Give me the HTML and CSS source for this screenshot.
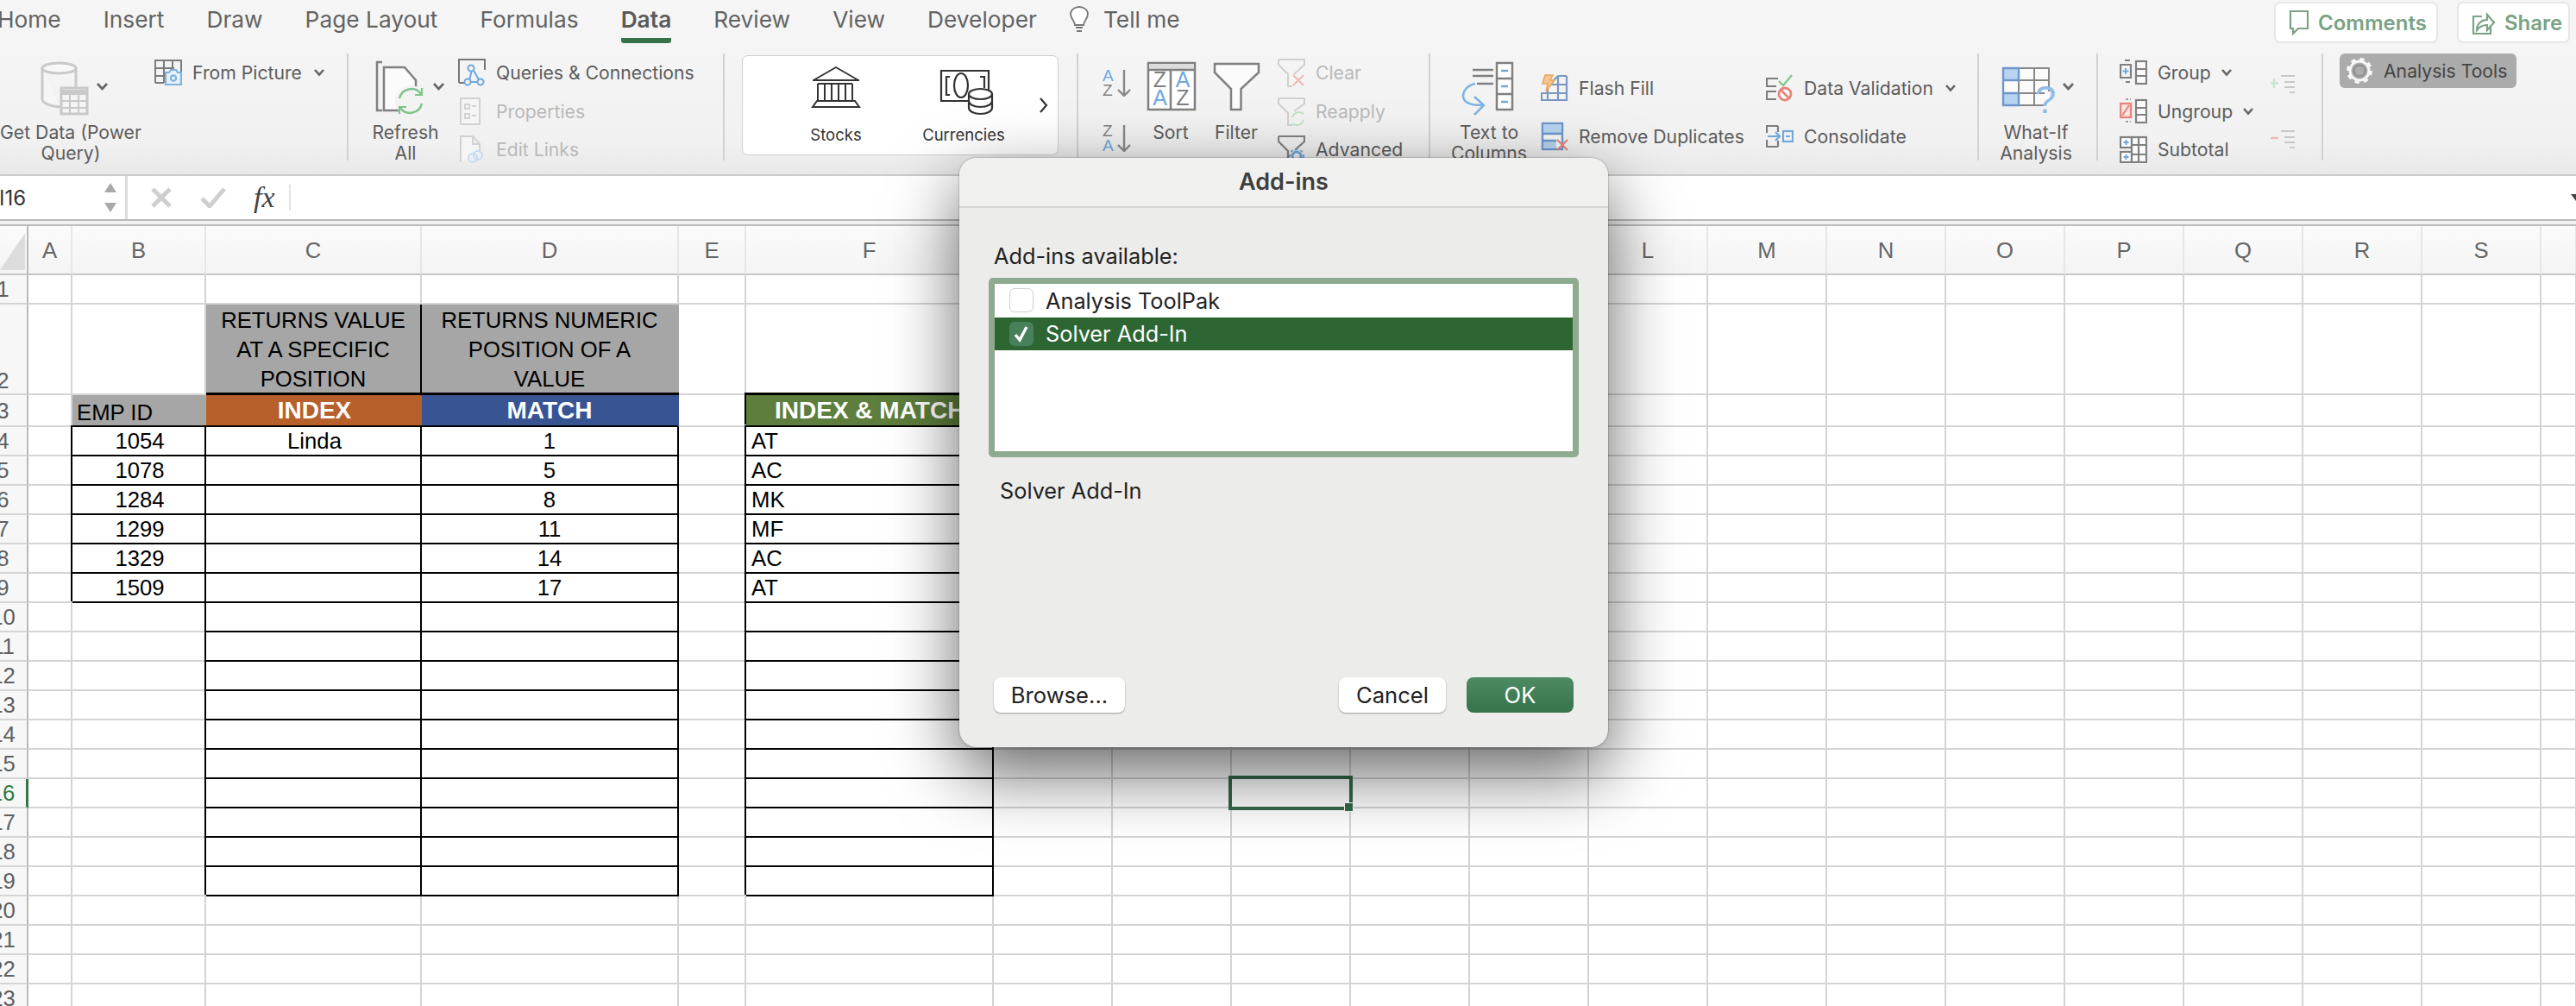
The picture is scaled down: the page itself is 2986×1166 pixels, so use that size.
FILE: index.html
```html
<!DOCTYPE html>
<html lang="en">
  <head>
    <meta charset="UTF-8" />
    <title>Excel - Add-ins</title>
    <link rel="stylesheet" href="styles.css">
  </head>
  <body>
    <svg class="defs" width="0" height="0">
      <symbol id="chev" viewBox="0 0 14 10"><path d="M2 2l5 5.5L12 2" fill="none" stroke="#666" stroke-width="2.6"/></symbol>
    </svg>

    <!-- tabs -->
    <div class="tabs">
      <span class="tab tab-first">Home</span>
      <span class="tab">Insert</span>
      <span class="tab">Draw</span>
      <span class="tab">Page Layout</span>
      <span class="tab">Formulas</span>
      <span class="tab active">Data</span>
      <span class="tab">Review</span>
      <span class="tab">View</span>
      <span class="tab">Developer</span>
      <span class="tell">
        <svg width="24" height="32" viewBox="0 0 24 32" fill="none" stroke="#777" stroke-width="1.8"><path d="M7 22c0-5-5-7-5-13a10 8 0 0 1 20 0c0 6-5 8-5 13z" fill="#fff"/><path d="M8 25h8M9 29h6"/></svg>
        Tell me
      </span>
      <div class="top-btns">
        <button class="top-btn btn-comments">
          <svg width="24" height="30" viewBox="0 0 24 30" fill="none" stroke="#7aa284" stroke-width="2.2"><path d="M2 2h20v20H11l-6 6v-6H2z"/></svg>
          Comments
        </button>
        <button class="top-btn btn-share">
          <svg width="28" height="30" viewBox="0 0 28 30" fill="none" stroke="#7aa284" stroke-width="2.2"><path d="M12 8H2v20h20v-8"/><path d="M6 24c0-8 6-12 12-12V6l8 9-8 9v-6c-5 0-9 2-12 6z"/></svg>
          Share
        </button>
      </div>
    </div>

    <!-- ribbon -->
    <div class="ribbon">
      <div class="group g-getdata">
        <div class="big big-getdata">
          <svg width="164" height="79" viewBox="0 0 164 79" fill="none" stroke="#c9c9c9" stroke-width="3">
            <path d="M49 17v36c0 4 8 8 21 9M88 17v22" fill="#f6f6f6"/>
            <ellipse cx="68.500" cy="17" rx="19.500" ry="6" fill="#f8f8f8"/>
            <rect x="71" y="40" width="30" height="30" fill="#f4f4f4"/>
            <path d="M71 45h30" stroke-width="6"/>
            <path d="M71 55h30M71 63h30M81 48v22M91 48v22" stroke-width="2"/>
            <path d="M113 35l5.500 6 5.500-6" stroke="#666" stroke-width="2.600"/>
          </svg>
          <div class="lbl">Get Data (Power<br>Query)</div>
        </div>
        <div class="stack">
          <div class="row">
            <svg width="32" height="30" viewBox="0 0 32 30" fill="none">
              <path d="M1 27V1h30v16M1 10h22M1 19h10M11 1v26M21 1v11M1 27h10" stroke="#7c7c7c" stroke-width="2"/>
              <path d="M13 15h4l2-3h6l2 3h4v14H13z" fill="#e8f1fa" stroke="#7fb2e0" stroke-width="2.200"/>
              <circle cx="22" cy="21.500" r="3.200" stroke="#7fb2e0" stroke-width="2.200"/>
            </svg>
            <span>From Picture</span>
            <svg class="chev" width="14" height="10"><use href="#chev"/></svg>
          </div>
        </div>
      </div>

      <div class="group g-refresh">
        <div class="big big-refresh">
          <svg width="120" height="79" viewBox="0 0 120 79" fill="none">
            <path d="M33 10h-6v56h6" stroke="#808080" stroke-width="2.500"/>
            <path d="M35 16h24l13 15v35H35z" fill="#fbfbfb" stroke="#808080" stroke-width="2.500"/>
            <circle cx="66" cy="55" r="18" fill="#f3f3f3"/>
            <path d="M53 52a14 14 0 0 1 25-5M79 58a14 14 0 0 1-25 5" stroke="#7fc48a" stroke-width="2.500"/>
            <path d="M79 40v8h-8M53 70v-8h8" stroke="#7fc48a" stroke-width="2.200"/>
            <path d="M93 35l5.500 6 5.500-6" stroke="#666" stroke-width="2.600"/>
          </svg>
          <div class="lbl">Refresh<br>All</div>
        </div>
        <div class="stack">
          <div class="row">
            <svg width="32" height="32" viewBox="0 0 32 32" fill="none">
              <path d="M1 28V1h30v12M1 28h8" stroke="#777" stroke-width="2"/>
              <path d="M16 12l-3 14M17 12l8 14M15 27h7" stroke="#6fa8dc" stroke-width="2"/>
              <circle cx="15" cy="11" r="3.500" fill="#f3f3f3" stroke="#6fa8dc" stroke-width="2"/>
              <circle cx="11" cy="27" r="3.500" fill="#f3f3f3" stroke="#6fa8dc" stroke-width="2"/>
              <circle cx="26" cy="27" r="3.500" fill="#f3f3f3" stroke="#6fa8dc" stroke-width="2"/>
            </svg>
            <span>Queries &amp; Connections</span>
          </div>
          <div class="row off">
            <svg width="32" height="32" viewBox="0 0 32 32" fill="none" stroke="#d2d2d2" stroke-width="2">
              <rect x="3" y="1" width="22" height="30" fill="#f5f5f5"/>
              <path d="M8 8h5v5H8zM8 19h5v5H8zM16 10h5M16 21h5"/>
            </svg>
            <span>Properties</span>
          </div>
          <div class="row off">
            <svg width="32" height="32" viewBox="0 0 32 32" fill="none" stroke="#d2d2d2" stroke-width="2">
              <path d="M3 31V1h14l8 9v9" fill="#f5f5f5"/>
              <path d="M17 1v9h8"/>
              <circle cx="17" cy="26" r="5" stroke="#c6dcf0"/>
              <circle cx="23" cy="23" r="5" stroke="#c6dcf0"/>
            </svg>
            <span>Edit Links</span>
          </div>
        </div>
      </div>

      <div class="group g-types">
        <div class="gallery">
          <div class="gal-item">
            <svg width="148" height="80" viewBox="0 0 148 80" fill="none" stroke="#333" stroke-width="2">
              <path d="M74 13L48 28h52zM47 28h54" stroke-linejoin="round"/>
              <path d="M53 32v20M61 32v20M69 32v20M77 32v20M85 32v20M93 32v20M53 32h40"/>
              <path d="M52 52h44l5 7H47z"/>
            </svg>
            <div class="gal-lbl">Stocks</div>
          </div>
          <div class="gal-item">
            <svg width="148" height="80" viewBox="0 0 148 80" fill="none" stroke="#333" stroke-width="2.200">
              <path d="M84 52H48V17h55v22"/>
              <path d="M58 24h-4v21h4M93 24h5v13"/>
              <ellipse cx="71" cy="34" rx="8" ry="14"/>
              <path d="M80 44v16c0 4 6 7 13.500 7s13.500-3 13.500-7V44" fill="#fff"/>
              <ellipse cx="93.500" cy="44" rx="13.500" ry="6" fill="#fff"/>
              <path d="M80 52c0 4 6 7 13.500 7s13.500-3 13.500-7"/>
            </svg>
            <div class="gal-lbl">Currencies</div>
          </div>
          <svg class="gal-more" width="12" height="22" viewBox="0 0 12 22" fill="none" stroke="#333" stroke-width="2.200"><path d="M2 3l7 8-7 8"/></svg>
        </div>
      </div>

      <div class="group g-sort">
        <div class="az">
          <svg width="34" height="32" viewBox="0 0 34 32" fill="none">
            <text x="0" y="14" class="ic-txt blue">A</text>
            <text x="0" y="31" class="ic-txt grey">Z</text>
            <path d="M25 1v30M18 24l7 7 7-7" stroke="#888" stroke-width="2.400"/>
          </svg>
          <svg width="34" height="32" viewBox="0 0 34 32" fill="none">
            <text x="0" y="14" class="ic-txt grey">Z</text>
            <text x="0" y="31" class="ic-txt blue">A</text>
            <path d="M25 1v30M18 24l7 7 7-7" stroke="#888" stroke-width="2.400"/>
          </svg>
        </div>
        <div class="big big-sort">
          <svg width="76" height="79" viewBox="0 0 76 79" fill="none">
            <rect x="12" y="11" width="54" height="54" fill="#fff" stroke="#808080" stroke-width="2.500"/>
            <rect x="13" y="12" width="52" height="7" fill="#dcdcdc"/>
            <path d="M38 19v46M13 19h52" stroke="#808080" stroke-width="2.500"/>
            <text x="25.500" y="39" class="ic-big grey" text-anchor="middle">Z</text>
            <text x="25.500" y="60" class="ic-big blue" text-anchor="middle">A</text>
            <text x="52" y="39" class="ic-big blue" text-anchor="middle">A</text>
            <text x="52" y="60" class="ic-big grey" text-anchor="middle">Z</text>
          </svg>
          <div class="lbl">Sort</div>
        </div>
        <div class="big big-filter">
          <svg width="76" height="79" viewBox="0 0 76 79" fill="none">
            <path d="M13 12h51v10L43.500 41v24H32V41L13 22z" fill="#fbfbfb" stroke="#808080" stroke-width="2.500"/>
          </svg>
          <div class="lbl">Filter</div>
        </div>
        <div class="stack stack-filter">
          <div class="row off">
            <svg width="32" height="34" viewBox="0 0 32 34" fill="none">
              <path d="M1 2h30v6L19 19M1 2v6l11 11v14h5" stroke="#d0d0d0" stroke-width="2"/>
              <path d="M18 20l12 12M30 20L18 32" stroke="#f2b8b2" stroke-width="2"/>
            </svg>
            <span>Clear</span>
          </div>
          <div class="row off">
            <svg width="32" height="34" viewBox="0 0 32 34" fill="none">
              <path d="M1 2h30v6L19 17M1 2v6l11 11v14h5" stroke="#d0d0d0" stroke-width="2"/>
              <path d="M17 24a8 8 0 0 1 13-4M30 27a8 8 0 0 1-13 4" stroke="#bfe3c6" stroke-width="2"/>
            </svg>
            <span>Reapply</span>
          </div>
          <div class="row on">
            <svg width="32" height="34" viewBox="0 0 32 34" fill="none">
              <path d="M1 2h30v6L20 18M1 2v6l11 11v14" stroke="#808080" stroke-width="2.200"/>
              <circle cx="22" cy="25" r="5" stroke="#6fa8dc" stroke-width="3"/>
              <circle cx="22" cy="25" r="8" stroke="#6fa8dc" stroke-width="2" stroke-dasharray="3 3"/>
            </svg>
            <span>Advanced</span>
          </div>
        </div>
      </div>

      <div class="group g-tools">
        <div class="big big-text">
          <svg width="120" height="79" viewBox="0 0 120 79" fill="none">
            <path d="M41 19h24M41 26h24M46 35h19" stroke="#808080" stroke-width="2.500"/>
            <rect x="69" y="11" width="18" height="54" fill="#fff" stroke="#808080" stroke-width="2.500"/>
            <path d="M69 29h18M69 47h18" stroke="#808080" stroke-width="2.500"/>
            <path d="M74 20h8M74 38h8M74 56h8" stroke="#6fa8dc" stroke-width="2.500"/>
            <path d="M44 35c-9 2-14 8-14 14 0 7 7 11 22 11" stroke="#7fb2e0" stroke-width="2.500"/>
            <path d="M43 50l11 10-11 11" stroke="#7fb2e0" stroke-width="2.500"/>
          </svg>
          <div class="lbl">Text to<br>Columns</div>
        </div>
        <div class="stack stack-two stack-dup">
          <div class="row">
            <svg width="32" height="32" viewBox="0 0 32 32" fill="none">
              <path d="M30 2v28H1v-8h29M30 12H9M20 2l-12 12v16M20 2h10M20 2v28" stroke="#7a97c4" stroke-width="2.200"/>
              <path d="M5 1h9l-3 6h5L6 20l2-9H2z" fill="#f6c48e" stroke="#e9a55c" stroke-width="1.500"/>
            </svg>
            <span>Flash Fill</span>
          </div>
          <div class="row">
            <svg width="32" height="34" viewBox="0 0 32 34" fill="none">
              <rect x="2" y="2" width="23" height="30" fill="#f8f8f8" stroke="#6d97cc" stroke-width="2.400"/>
              <rect x="3" y="3" width="21" height="11" fill="#b7d3ef"/>
              <rect x="3" y="22" width="15" height="9" fill="#b7d3ef"/>
              <path d="M2 14h23M2 22h16" stroke="#6d97cc" stroke-width="2.400"/>
              <path d="M19 21l12 12M31 21L19 33" stroke="#e7857c" stroke-width="2.200"/>
            </svg>
            <span>Remove Duplicates</span>
          </div>
        </div>
        <div class="stack stack-two stack-val">
          <div class="row">
            <svg width="32" height="32" viewBox="0 0 32 32" fill="none">
              <path d="M14 5H1v9h11M12 20H1v9h11" stroke="#7c7c7c" stroke-width="2.200"/>
              <path d="M15 8l5 5 10-12" stroke="#83c68d" stroke-width="2.400"/>
              <circle cx="22" cy="23" r="7" fill="#fff" stroke="#e7857c" stroke-width="2.800"/>
              <path d="M17 18l10 10" stroke="#e7857c" stroke-width="2.800"/>
            </svg>
            <span>Data Validation</span>
            <svg class="chev" width="14" height="10"><use href="#chev"/></svg>
          </div>
          <div class="row">
            <svg width="32" height="28" viewBox="0 0 32 28" fill="none">
              <path d="M14 2H1v8M14 26H1v-8M14 2v7M14 26v-7" stroke="#7c7c7c" stroke-width="2.200"/>
              <path d="M2 14h14M11 9l5 5-5 5" stroke="#6fa8dc" stroke-width="2.200"/>
              <rect x="20" y="8" width="11" height="12" stroke="#6fa8dc" stroke-width="2.200"/>
              <path d="M23 14h5" stroke="#6fa8dc" stroke-width="2"/>
            </svg>
            <span>Consolidate</span>
          </div>
        </div>
      </div>

      <div class="group g-whatif">
        <div class="big big-whatif">
          <svg width="124" height="79" viewBox="0 0 124 79" fill="none">
            <rect x="24" y="17" width="53" height="43" fill="#fbfbfb"/>
            <rect x="24" y="17" width="18" height="14" fill="#b7d3ef"/>
            <rect x="24" y="46" width="18" height="14" fill="#b7d3ef"/>
            <path d="M77 44V17H24v43h48M42 17v43M60 17v43M24 31h53M24 46h48" stroke="#888" stroke-width="2"/>
            <path d="M24 17h18v14H24zM24 46h18v14H24zM24 31v15" stroke="#6d97cc" stroke-width="2.400"/>
            <text x="73" y="69" class="ic-q" text-anchor="middle">?</text>
            <path d="M94 35l5.500 6 5.500-6" stroke="#666" stroke-width="2.600"/>
          </svg>
          <div class="lbl">What-If<br>Analysis</div>
        </div>
      </div>

      <div class="group g-outline">
        <div class="stack">
          <div class="row">
            <svg width="32" height="30" viewBox="0 0 32 30" fill="none">
              <path d="M12 1H6M1 6h12v15H1zM7 26h5" stroke="#808080" stroke-width="2.200"/>
              <rect x="19" y="2" width="12" height="26" fill="#fbfbfb" stroke="#808080" stroke-width="2.200"/>
              <path d="M19 11h12M19 19h12" stroke="#808080" stroke-width="2.200"/>
              <path d="M7 10v7M3.500 13.500h7" stroke="#6fa8dc" stroke-width="2"/>
            </svg>
            <span>Group</span>
            <svg class="chev" width="14" height="10"><use href="#chev"/></svg>
          </div>
          <div class="row">
            <svg width="32" height="30" viewBox="0 0 32 30" fill="none">
              <rect x="1" y="6" width="12" height="16" fill="#fbe6e4" stroke="#e7857c" stroke-width="2.400"/>
              <path d="M3 20l8-12" stroke="#e7857c" stroke-width="2.200"/>
              <path d="M7 1h6M7 27h6" stroke="#a0a0a0" stroke-width="2" stroke-dasharray="3 2"/>
              <rect x="19" y="2" width="12" height="26" fill="#fbfbfb" stroke="#808080" stroke-width="2.200"/>
              <path d="M19 11h12M19 19h12" stroke="#808080" stroke-width="2.200"/>
            </svg>
            <span>Ungroup</span>
            <svg class="chev" width="14" height="10"><use href="#chev"/></svg>
          </div>
          <div class="row">
            <svg width="32" height="32" viewBox="0 0 32 32" fill="none">
              <rect x="1" y="2" width="13" height="12" fill="#fbfbfb" stroke="#808080" stroke-width="2.200"/>
              <rect x="1" y="19" width="13" height="12" fill="#fbfbfb" stroke="#808080" stroke-width="2.200"/>
              <rect x="14" y="2" width="17" height="29" fill="#fbfbfb" stroke="#808080" stroke-width="2.200"/>
              <path d="M22 2v29M14 11h17M14 22h17" stroke="#808080" stroke-width="2.200"/>
              <path d="M7.500 5v6M4.500 8h6M7.500 22v6M4.500 25h6" stroke="#6fa8dc" stroke-width="2"/>
            </svg>
            <span>Subtotal</span>
          </div>
        </div>
        <div class="outline-side">
          <svg width="30" height="22" viewBox="0 0 30 22" fill="none">
            <path d="M4 5v11M0 10.500h9" stroke="#c7e6cb" stroke-width="2.400"/>
            <path d="M12 2h16M16 9h12M16 15h12M22 21h6" stroke="#c8c8c8" stroke-width="2"/>
          </svg>
          <svg width="30" height="22" viewBox="0 0 30 22" fill="none">
            <path d="M0 10h9" stroke="#f2b8b2" stroke-width="2.400"/>
            <path d="M12 2h16M16 9h12M16 15h12M22 21h6" stroke="#c8c8c8" stroke-width="2"/>
          </svg>
        </div>
      </div>

      <div class="group g-analysis">
        <div class="analysis">
          <svg width="30" height="32" viewBox="0 0 30 32" fill="none">
            <circle cx="15" cy="16" r="11" stroke="#f7f7f7" stroke-width="3"/>
            <circle cx="15" cy="16" r="13" stroke="#f7f7f7" stroke-width="4" stroke-dasharray="5.200 5"/>
            <circle cx="15" cy="16" r="6.500" stroke="#8e8e8e" stroke-width="2"/>
          </svg>
          <span>Analysis Tools</span>
        </div>
      </div>
    </div>

    <!-- formula bar -->
    <div class="formula">
      <div class="namebox">
        <span class="name">I16</span>
        <div class="spin"><i class="up"></i><i class="down"></i></div>
      </div>
      <svg class="fb-x" width="24" height="24" viewBox="0 0 24 24" fill="none" stroke="#cfcfcf" stroke-width="5"><path d="M2 2l20 20M22 2L2 22"/></svg>
      <svg class="fb-check" width="30" height="24" viewBox="0 0 30 24" fill="none" stroke="#cfcfcf" stroke-width="5"><path d="M2 13l9 9L28 2"/></svg>
      <span class="fx">fx</span>
      <span class="fb-sep"></span>
      <svg class="fb-more" width="6" height="8" viewBox="0 0 6 8"><path d="M0 0h6v8z" fill="#444"/></svg>
    </div>

    <!-- sheet -->
    <div class="sheet-wrap">
      <table class="sheet">
        <colgroup>
          <col class="c-rh"><col class="c-a"><col class="c-b"><col class="c-c"><col class="c-d"><col class="c-e"><col class="c-f">
          <col class="c-n"><col class="c-n"><col class="c-n"><col class="c-n"><col class="c-n"><col class="c-n"><col class="c-n"><col class="c-n"><col class="c-n"><col class="c-n"><col class="c-n"><col class="c-n"><col class="c-n"><col class="c-t">
        </colgroup>
        <tr class="r-head">
          <th class="corner"><i></i></th><th>A</th><th>B</th><th>C</th><th>D</th><th>E</th><th>F</th><th>G</th><th>H</th><th>I</th><th>J</th><th>K</th><th>L</th><th>M</th><th>N</th><th>O</th><th>P</th><th>Q</th><th>R</th><th>S</th><th></th>
        </tr>
        <tr>
          <th class="rh"><span>1</span></th><td></td><td></td><td></td><td></td><td></td><td></td><td></td><td></td><td></td><td></td><td></td><td></td><td></td><td></td><td></td><td></td><td></td><td></td><td></td><td></td>
        </tr>
        <tr class="r2">
          <th class="rh"><span>2</span></th><td></td><td></td><td class="cap cap-c">RETURNS VALUE<br>AT A SPECIFIC<br>POSITION</td><td class="cap cap-d">RETURNS NUMERIC<br>POSITION OF A<br>VALUE</td><td></td><td></td><td></td><td></td><td></td><td></td><td></td><td></td><td></td><td></td><td></td><td></td><td></td><td></td><td></td><td></td>
        </tr>
        <tr class="r3">
          <th class="rh"><span>3</span></th><td></td><td class="emp">EMP ID</td><td class="hd hd-index nudge">INDEX</td><td class="hd hd-match">MATCH</td><td></td><td class="hd hd-both">INDEX &amp; MATCH</td><td></td><td></td><td></td><td></td><td></td><td></td><td></td><td></td><td></td><td></td><td></td><td></td><td></td><td></td>
        </tr>
        <tr>
          <th class="rh"><span>4</span></th><td></td><td class="box mid nudge">1054</td><td class="box mid nudge">Linda</td><td class="box mid">1</td><td></td><td class="box txt">AT</td><td></td><td></td><td></td><td></td><td></td><td></td><td></td><td></td><td></td><td></td><td></td><td></td><td></td><td></td>
        </tr>
        <tr>
          <th class="rh"><span>5</span></th><td></td><td class="box mid nudge">1078</td><td class="box"></td><td class="box mid">5</td><td></td><td class="box txt">AC</td><td></td><td></td><td></td><td></td><td></td><td></td><td></td><td></td><td></td><td></td><td></td><td></td><td></td><td></td>
        </tr>
        <tr>
          <th class="rh"><span>6</span></th><td></td><td class="box mid nudge">1284</td><td class="box"></td><td class="box mid">8</td><td></td><td class="box txt">MK</td><td></td><td></td><td></td><td></td><td></td><td></td><td></td><td></td><td></td><td></td><td></td><td></td><td></td><td></td>
        </tr>
        <tr>
          <th class="rh"><span>7</span></th><td></td><td class="box mid nudge">1299</td><td class="box"></td><td class="box mid">11</td><td></td><td class="box txt">MF</td><td></td><td></td><td></td><td></td><td></td><td></td><td></td><td></td><td></td><td></td><td></td><td></td><td></td><td></td>
        </tr>
        <tr>
          <th class="rh"><span>8</span></th><td></td><td class="box mid nudge">1329</td><td class="box"></td><td class="box mid">14</td><td></td><td class="box txt">AC</td><td></td><td></td><td></td><td></td><td></td><td></td><td></td><td></td><td></td><td></td><td></td><td></td><td></td><td></td>
        </tr>
        <tr>
          <th class="rh"><span>9</span></th><td></td><td class="box mid nudge">1509</td><td class="box"></td><td class="box mid">17</td><td></td><td class="box txt">AT</td><td></td><td></td><td></td><td></td><td></td><td></td><td></td><td></td><td></td><td></td><td></td><td></td><td></td><td></td>
        </tr>
        <tr>
          <th class="rh"><span>10</span></th><td></td><td></td><td class="box"></td><td class="box"></td><td></td><td class="box"></td><td></td><td></td><td></td><td></td><td></td><td></td><td></td><td></td><td></td><td></td><td></td><td></td><td></td><td></td>
        </tr>
        <tr>
          <th class="rh"><span>11</span></th><td></td><td></td><td class="box"></td><td class="box"></td><td></td><td class="box"></td><td></td><td></td><td></td><td></td><td></td><td></td><td></td><td></td><td></td><td></td><td></td><td></td><td></td><td></td>
        </tr>
        <tr>
          <th class="rh"><span>12</span></th><td></td><td></td><td class="box"></td><td class="box"></td><td></td><td class="box"></td><td></td><td></td><td></td><td></td><td></td><td></td><td></td><td></td><td></td><td></td><td></td><td></td><td></td><td></td>
        </tr>
        <tr>
          <th class="rh"><span>13</span></th><td></td><td></td><td class="box"></td><td class="box"></td><td></td><td class="box"></td><td></td><td></td><td></td><td></td><td></td><td></td><td></td><td></td><td></td><td></td><td></td><td></td><td></td><td></td>
        </tr>
        <tr>
          <th class="rh"><span>14</span></th><td></td><td></td><td class="box"></td><td class="box"></td><td></td><td class="box"></td><td></td><td></td><td></td><td></td><td></td><td></td><td></td><td></td><td></td><td></td><td></td><td></td><td></td><td></td>
        </tr>
        <tr>
          <th class="rh"><span>15</span></th><td></td><td></td><td class="box"></td><td class="box"></td><td></td><td class="box"></td><td></td><td></td><td></td><td></td><td></td><td></td><td></td><td></td><td></td><td></td><td></td><td></td><td></td><td></td>
        </tr>
        <tr>
          <th class="rh rh-sel"><span>16</span></th><td></td><td></td><td class="box"></td><td class="box"></td><td></td><td class="box"></td><td></td><td></td><td class="sel"><i class="sel-box"></i><i class="sel-handle"></i></td><td></td><td></td><td></td><td></td><td></td><td></td><td></td><td></td><td></td><td></td><td></td>
        </tr>
        <tr>
          <th class="rh"><span>17</span></th><td></td><td></td><td class="box"></td><td class="box"></td><td></td><td class="box"></td><td></td><td></td><td></td><td></td><td></td><td></td><td></td><td></td><td></td><td></td><td></td><td></td><td></td><td></td>
        </tr>
        <tr>
          <th class="rh"><span>18</span></th><td></td><td></td><td class="box"></td><td class="box"></td><td></td><td class="box"></td><td></td><td></td><td></td><td></td><td></td><td></td><td></td><td></td><td></td><td></td><td></td><td></td><td></td><td></td>
        </tr>
        <tr>
          <th class="rh"><span>19</span></th><td></td><td></td><td class="box"></td><td class="box"></td><td></td><td class="box"></td><td></td><td></td><td></td><td></td><td></td><td></td><td></td><td></td><td></td><td></td><td></td><td></td><td></td><td></td>
        </tr>
        <tr>
          <th class="rh"><span>20</span></th><td></td><td></td><td></td><td></td><td></td><td></td><td></td><td></td><td></td><td></td><td></td><td></td><td></td><td></td><td></td><td></td><td></td><td></td><td></td><td></td>
        </tr>
        <tr>
          <th class="rh"><span>21</span></th><td></td><td></td><td></td><td></td><td></td><td></td><td></td><td></td><td></td><td></td><td></td><td></td><td></td><td></td><td></td><td></td><td></td><td></td><td></td><td></td>
        </tr>
        <tr>
          <th class="rh"><span>22</span></th><td></td><td></td><td></td><td></td><td></td><td></td><td></td><td></td><td></td><td></td><td></td><td></td><td></td><td></td><td></td><td></td><td></td><td></td><td></td><td></td>
        </tr>
        <tr>
          <th class="rh"><span>23</span></th><td></td><td></td><td></td><td></td><td></td><td></td><td></td><td></td><td></td><td></td><td></td><td></td><td></td><td></td><td></td><td></td><td></td><td></td><td></td><td></td>
        </tr>
      </table>
    </div>

    <!-- add-ins dialog -->
    <div class="dialog">
      <div class="dlg-title">Add-ins</div>
      <div class="dlg-body">
        <div class="dlg-label">Add-ins available:</div>
        <div class="list">
          <div class="item">
            <span class="check"></span>
            <span>Analysis ToolPak</span>
          </div>
          <div class="item picked">
            <span class="check checked">
              <svg width="18" height="20" viewBox="0 0 18 20" fill="none" stroke="#fff" stroke-width="3.400"><path d="M2 11l5 6 8-15"/></svg>
            </span>
            <span>Solver Add-In</span>
          </div>
        </div>
        <div class="dlg-desc">Solver Add-In</div>
        <div class="dlg-foot">
          <button class="btn">Browse...</button>
          <button class="btn btn-cancel">Cancel</button>
          <button class="btn btn-ok">OK</button>
        </div>
      </div>
    </div>
  </body>
</html>
```

FILE: styles.css
```css
* {
  box-sizing: border-box;
}
html, body {
  margin: 0;
  height: 1166px;
  overflow: hidden;
}
body {
  position: relative;
  width: 2986px;
  font-family: Inter, "Noto Sans", sans-serif;
  color: #5c5c5c;
  background: #fff;
}
.defs {
  position: absolute;
}

/* tabs */
.tabs {
  display: flex;
  align-items: flex-start;
  height: 50px;
  background: #f5f5f5;
  font-size: 26.300px;
  color: #636363;
}
.tab {
  margin-right: 49px;
  height: 50px;
  padding-top: 8px;
  line-height: 30px;
  white-space: nowrap;
}
.tab-first {
  margin-left: -3px;
}
.tab.active {
  font-weight: 600;
  border-bottom: 6px solid #35734a;
  border-radius: 0 0 3px 3px;
  color: #5a5a5a;
}
.tell {
  display: flex;
  align-items: center;
  gap: 16px;
  margin-left: -12px;
  padding-top: 7px;
  line-height: 30px;
}
.top-btns {
  display: flex;
  gap: 22px;
  margin-left: auto;
  margin-right: 7px;
  padding-top: 2px;
}
.top-btn {
  display: flex;
  align-items: center;
  gap: 10px;
  height: 48px;
  padding: 0 0 0 15px;
  background: #fff;
  border: 2px solid #e6e6e6;
  border-radius: 7px;
  font: 600 24px Inter, sans-serif;
  color: #7aa284;
}
.btn-comments {
  width: 190px;
}
.btn-share {
  width: 131px;
}

/* ribbon */
.ribbon {
  display: flex;
  height: 154px;
  background: linear-gradient(#f5f5f5 0, #f1f1f1 75%, #e9e9e9 100%);
  border-bottom: 2px solid #cacaca;
  font-size: 21.200px;
}
.group {
  display: flex;
  flex-shrink: 0;
  height: 124px;
  margin-top: 12px;
  border-right: 2px solid #d2d2d2;
}
.g-getdata { width: 404px; }
.g-refresh { width: 436px; }
.g-types { width: 410px; }
.g-sort { width: 408px; }
.g-tools { width: 636px; }
.g-whatif { width: 138px; }
.g-outline { width: 261px; }
.g-analysis { border-right: 0; }

.big {
  display: flex;
  flex-direction: column;
  align-items: center;
  flex-shrink: 0;
}
.big svg {
  display: block;
  flex-shrink: 0;
}
.lbl {
  line-height: 24px;
  text-align: center;
  white-space: nowrap;
}
.big-getdata { width: 164px; }
.big-refresh { width: 120px; margin-left: 6px; }
.big-sort, .big-filter { width: 76px; }
.big-sort { margin-left: 7px; }
.big-text { width: 120px; margin-left: 8px; }
.big-whatif { width: 124px; margin-left: 4px; }

.stack {
  display: flex;
  flex-direction: column;
}
.row {
  display: flex;
  flex-shrink: 0;
  align-items: center;
  gap: 12px;
  height: 44.500px;
  white-space: nowrap;
}
.row.off {
  color: #b9b9b9;
}
.row svg {
  flex-shrink: 0;
}
.row .chev {
  margin-left: 1px;
}
.g-getdata .stack {
  margin-left: 15px;
}
.g-refresh .stack {
  margin-left: 1px;
}
.stack-filter {
  margin-left: 10px;
}
.stack-two {
  padding-top: 12px;
}
.stack-two .row {
  height: 56px;
}
.stack-dup {
  width: 261px;
}
.g-outline .stack {
  width: 175px;
  margin-left: 25px;
}
.g-outline .row {
  gap: 12px;
}
.g-outline .row .chev {
  margin-left: -1px;
}
.outline-side {
  display: flex;
  flex-direction: column;
  gap: 42px;
  padding-top: 24px;
}
.ic-txt {
  font: 19px "Liberation Sans", sans-serif;
}
.ic-big {
  font: 25px "Liberation Sans", sans-serif;
}
.ic-q {
  font: 44px "Liberation Sans", sans-serif;
  fill: #8fbce6;
}
.blue { fill: #6fa8dc; }
.grey { fill: #808080; }

.az {
  display: flex;
  flex-direction: column;
  gap: 32px;
  margin-left: 28px;
  padding-top: 18px;
}
.gallery {
  display: flex;
  align-items: flex-start;
  width: 367px;
  height: 116px;
  margin: 2px 0 0 20px;
  padding-left: 34px;
  background: #fff;
  border: 1px solid #cfcfcf;
  border-radius: 7px;
}
.gal-item {
  width: 148px;
}
.gal-item svg {
  display: block;
}
.gal-lbl {
  font-size: 18.500px;
  line-height: 22px;
  text-align: center;
  color: #333;
}
.gal-more {
  margin: 46px 0 0 13px;
}
.analysis {
  display: flex;
  align-items: center;
  gap: 13px;
  width: 205px;
  height: 40px;
  margin-left: 19px;
  padding-left: 8px;
  background: #ababab;
  border-radius: 6px;
  color: #444;
}

/* formula bar */
.formula {
  display: flex;
  align-items: center;
  height: 52px;
  background: #fff;
  border-bottom: 2px solid #b9b9b9;
}
.namebox {
  display: flex;
  align-items: center;
  justify-content: space-between;
  align-self: stretch;
  width: 148px;
  padding-right: 10px;
  border-right: 3px solid #dcdcdc;
  font-size: 24px;
  color: #333;
}
.name {
  margin-left: -1px;
}
.spin {
  display: flex;
  flex-direction: column;
  gap: 12px;
}
.spin i {
  display: block;
  width: 0;
  border-left: 7px solid transparent;
  border-right: 7px solid transparent;
}
.spin .up {
  border-bottom: 11px solid #a9a9a9;
}
.spin .down {
  border-top: 11px solid #a9a9a9;
}
.fb-x {
  margin-left: 27px;
}
.fb-check {
  margin-left: 33px;
}
.fx {
  margin-left: 32px;
  font: italic 34px "Liberation Serif", serif;
  color: #444;
}
.fb-sep {
  width: 2px;
  height: 30px;
  margin-left: 16px;
  background: #e2e2e2;
}
.fb-more {
  margin-left: auto;
}

/* sheet */
.sheet-wrap {
  padding-top: 4px;
  background: #f1f1f1;
}
.sheet {
  width: 2986px;
  table-layout: fixed;
  border-spacing: 0;
  border-top: 2px solid #bcbcbc;
  background: #fff;
  font: 25.700px/30px "Liberation Sans", sans-serif;
  color: #000;
}
.c-rh { width: 33px; }
.c-a { width: 51px; }
.c-b { width: 155px; }
.c-c { width: 250px; }
.c-d { width: 298px; }
.c-e { width: 78px; }
.c-f { width: 287px; }
.c-n { width: 138px; }
.c-t { width: 41px; }

.sheet tr {
  height: 34px;
}
.sheet .r-head {
  height: 57px;
}
.sheet .r2 {
  height: 105px;
}
.sheet .r3 {
  height: 37px;
}
td, th {
  padding: 0;
  border-right: 2px solid #d4d4d4;
  border-bottom: 2px solid #d4d4d4;
  white-space: nowrap;
}
.r-head th {
  background: linear-gradient(#fbfbfb, #f4f4f4);
  border-right-color: #e6e6e6;
  border-bottom-color: #c6c6c6;
  font-weight: 400;
  color: #666;
}
.r-head .corner {
  position: relative;
  border-right: 2px solid #b9b9b9;
}
.corner i {
  position: absolute;
  left: 0;
  top: 8px;
  width: 29px;
  height: 43px;
  background: #dcdcdc;
  clip-path: polygon(100% 0, 100% 100%, 0 100%);
}
.rh {
  position: relative;
  background: #f7f7f7;
  border-right-color: #b9b9b9;
  font-weight: 400;
  color: #5f5f5f;
}
/* numbers are centred near x=4, the window cuts off what is left of it */
.rh span {
  display: block;
  margin-left: -24px;
  text-align: center;
}
.r2 .rh {
  vertical-align: bottom;
}
.rh-sel {
  border-right: 3px solid #35734a;
  color: #2f7a45;
}

.box {
  border-right-color: #000;
  border-bottom-color: #000;
  box-shadow: -2px -2px 0 #000;
}
.mid {
  text-align: center;
}
.nudge {
  padding-left: 3px;
}
.txt {
  padding-left: 6px;
}
.cap {
  background: #a6a6a6;
  border-bottom-color: #a6a6a6;
  line-height: 34px;
  text-align: center;
  vertical-align: bottom;
}
.cap-c {
  border-right-color: #000;
}
.cap-d {
  border-right-color: #a6a6a6;
}
.emp {
  padding-left: 5px;
  background: #a6a6a6;
  border-right-color: #a6a6a6;
  border-bottom-color: #000;
  vertical-align: bottom;
}
.hd {
  border-bottom-color: #000;
  box-shadow: 0 -3px 0 #000;
  font-size: 28px;
  font-weight: 700;
  text-align: center;
  color: #fff;
}
.hd-index {
  background: #b8602b;
  border-right-color: #b8602b;
}
.hd-match {
  background: #385492;
  border-right-color: #385492;
}
.hd-both {
  padding-left: 33px;
  background: #5d7e3c;
  border-right-color: #000;
  box-shadow: -2px -3px 0 #000;
  text-align: left;
}
.sel {
  position: relative;
}
.sel-box {
  position: absolute;
  left: -4px;
  right: -4px;
  top: -4px;
  bottom: -4px;
  border: 4px solid #35684a;
}
.sel-handle {
  position: absolute;
  right: -5px;
  bottom: -6px;
  width: 11px;
  height: 11px;
  background: #35684a;
  border: 1px solid #fff;
}

/* dialog */
.dialog {
  position: absolute;
  left: 1112px;
  top: 183px;
  display: flex;
  flex-direction: column;
  width: 752px;
  height: 683px;
  background: #ecedeb;
  border-radius: 20px;
  box-shadow: 0 0 2px rgba(0, 0, 0, 0.5), 0 30px 80px rgba(0, 0, 0, 0.6);
  font-size: 25.300px;
  color: #222;
}
.dlg-title {
  height: 58px;
  background: #f0f0ef;
  border-bottom: 2px solid #d4d4d2;
  border-radius: 20px 20px 0 0;
  font-size: 27px;
  font-weight: 600;
  line-height: 56px;
  text-align: center;
  color: #3e3e3e;
}
.dlg-body {
  display: flex;
  flex: 1;
  flex-direction: column;
  padding: 40px 40px 40px;
}
.dlg-label {
  line-height: 32px;
}
.list {
  width: 684px;
  height: 208px;
  margin: 9px 0 0 -6px;
  background: #fff;
  border: 7px solid #8eaa8f;
  border-radius: 5px;
}
.item {
  display: flex;
  align-items: center;
  gap: 14px;
  height: 38.500px;
  padding-left: 17px;
}
.item.picked {
  background: #2d6633;
  color: #fff;
}
.check {
  display: flex;
  align-items: center;
  justify-content: center;
  width: 28px;
  height: 28px;
  background: #fff;
  border: 1px solid #d0d0d0;
  border-radius: 6px;
}
.check.checked {
  background: #47805a;
  border: 0;
}
.dlg-desc {
  margin: 23px 0 0 7px;
  line-height: 32px;
}
.dlg-foot {
  display: flex;
  gap: 24px;
  margin-top: auto;
}
.btn {
  height: 41px;
  padding: 0;
  width: 152px;
  background: #fff;
  border: 0;
  border-radius: 8px;
  box-shadow: 0 1px 2px rgba(0, 0, 0, 0.35);
  font: 25.600px Inter, sans-serif;
  color: #222;
}
.btn-cancel {
  width: 124px;
  margin-left: auto;
}
.btn-ok {
  width: 124px;
  background: linear-gradient(#4e8b62, #35734a);
  box-shadow: none;
  color: #fff;
}
```
